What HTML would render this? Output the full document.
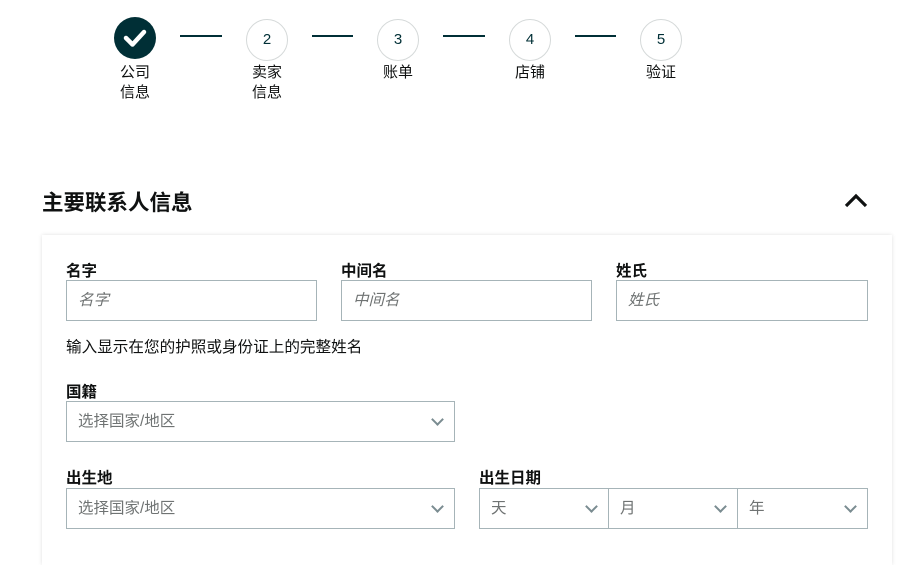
<!DOCTYPE html>
<html><head><meta charset="utf-8"><style>
body{margin:0;width:913px;height:548px;overflow:hidden;background:#fff;font-family:"Liberation Sans","Noto Sans CJK SC",sans-serif;color:#0f1111;position:relative}
.a{position:absolute}
.c{position:absolute;width:42px;height:42px;border-radius:50%;border:1px solid #d5d9d9;box-sizing:border-box;text-align:center;line-height:40px;font-size:15px;color:#002f36;background:#fff}
.ln{position:absolute;height:2px;background:#002f36;top:35px}
.st{position:absolute;font-size:15px;line-height:20px;text-align:center;width:60px;color:#0f1111}
.lb{position:absolute;font-size:15.5px;font-weight:bold}
.in{position:absolute;height:41px;border:1px solid #a6b4b8;box-sizing:border-box;font-size:15.5px;color:#6f7373;padding-left:11px;line-height:39px}
.in i{font-style:italic}
.ch{position:absolute;right:12px;top:13px;width:7px;height:7px;border-right:2px solid #7a8c91;border-bottom:2px solid #7a8c91;transform:rotate(45deg)}
</style></head><body>
<div class="c" style="left:114px;top:17px;background:#002f36;border:none">
<svg width="42" height="42" viewBox="0 0 42 42"><path d="M12 21 L18.5 27.5 L30 15" stroke="#fff" stroke-width="4.5" fill="none" stroke-linecap="round" stroke-linejoin="round"/></svg></div>
<div class="ln" style="left:180px;width:42px"></div>
<div class="c" style="left:246px;top:19px">2</div>
<div class="ln" style="left:312px;width:41px"></div>
<div class="c" style="left:377px;top:19px">3</div>
<div class="ln" style="left:443px;width:42px"></div>
<div class="c" style="left:509px;top:19px">4</div>
<div class="ln" style="left:575px;width:41px"></div>
<div class="c" style="left:640px;top:19px">5</div>
<div class="st" style="left:105px;top:63px">公司<br>信息</div>
<div class="st" style="left:237px;top:63px">卖家<br>信息</div>
<div class="st" style="left:368px;top:63px">账单</div>
<div class="st" style="left:500px;top:63px">店铺</div>
<div class="st" style="left:631px;top:63px">验证</div>
<div class="a" style="left:42px;top:186px;font-size:21.5px;font-weight:bold;color:#0f1111">主要联系人信息</div>
<svg class="a" style="left:843px;top:192px" width="26" height="18" viewBox="0 0 26 18"><path d="M3 14 L13 4 L23 14" stroke="#0f1111" stroke-width="3.2" fill="none"/></svg>
<div class="a" style="left:42px;top:235px;width:850px;height:330px;background:#fff;box-shadow:0 0 4px rgba(0,0,0,.12)"></div>
<div class="lb" style="left:66px;top:259px">名字</div>
<div class="lb" style="left:341px;top:259px">中间名</div>
<div class="lb" style="left:616px;top:259px">姓氏</div>
<div class="in" style="left:66px;top:280px;width:251px"><i>名字</i></div>
<div class="in" style="left:341px;top:280px;width:251px"><i>中间名</i></div>
<div class="in" style="left:616px;top:280px;width:252px"><i>姓氏</i></div>
<div class="a" style="left:66px;top:335px;font-size:15.6px;color:#0f1111">输入显示在您的护照或身份证上的完整姓名</div>
<div class="lb" style="left:66px;top:380px">国籍</div>
<div class="in" style="left:66px;top:401px;width:389px">选择国家/地区<span class="ch"></span></div>
<div class="lb" style="left:66px;top:466px">出生地</div>
<div class="in" style="left:66px;top:488px;width:389px">选择国家/地区<span class="ch"></span></div>
<div class="lb" style="left:479px;top:466px">出生日期</div>
<div class="in" style="left:479px;top:488px;width:130px">天<span class="ch"></span></div>
<div class="in" style="left:608px;top:488px;width:130px">月<span class="ch"></span></div>
<div class="in" style="left:737px;top:488px;width:131px">年<span class="ch"></span></div>
</body></html>
